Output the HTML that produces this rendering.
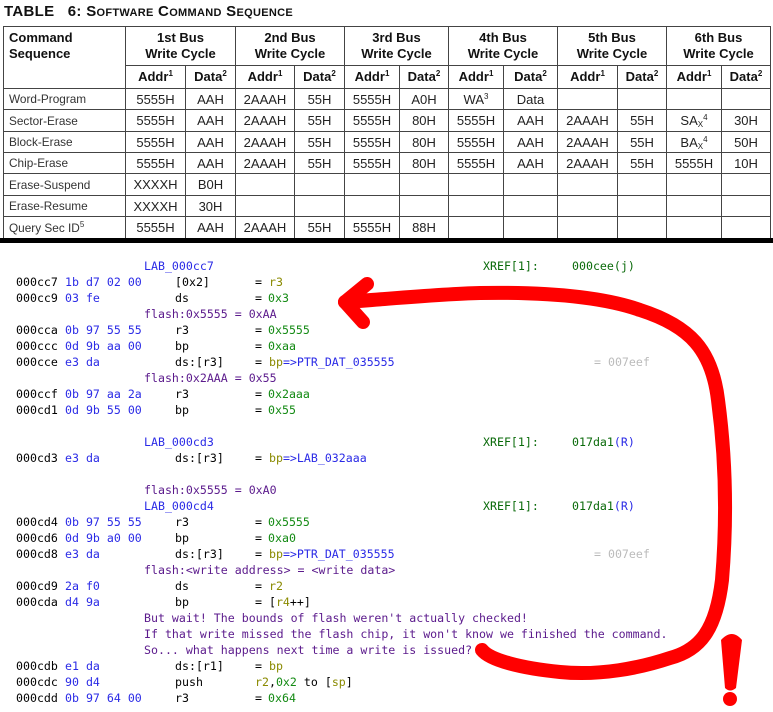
<!DOCTYPE html>
<html><head><meta charset="utf-8">
<style>
body{margin:0;width:773px;height:712px;background:#fff;position:relative;overflow:hidden;}
.title{position:absolute;left:4px;top:3px;font:bold 15px "Liberation Sans",sans-serif;font-variant:small-caps;color:#111;letter-spacing:0.3px}
table{position:absolute;left:3px;top:26px;border-collapse:collapse;table-layout:fixed;font-family:"Liberation Sans",sans-serif;color:#222}
td,th{border:1px solid #444;padding:0;text-align:center;font-size:13px;overflow:hidden;white-space:nowrap}
th{font-weight:bold;color:#111;font-size:13px;line-height:16px}
td.n{text-align:left;padding-left:5px;font-size:11.8px;color:#333}
sup{font-size:8px;vertical-align:5px;line-height:0}
sub{font-size:8px;vertical-align:-2px;line-height:0}
.bar{position:absolute;left:0;top:238px;width:773px;height:5px;background:#000}
.code{position:absolute;left:0;top:0;font:11.6px "DejaVu Sans Mono",monospace;white-space:pre}
.l{position:absolute;height:16px;line-height:16px;left:0;width:773px}
.l span{position:absolute}
.a{left:16px;color:#000}.b{left:65px;color:#2a2ae6}.lb{left:144px;color:#2a2ae6}.c{left:144px;color:#5b1a8c}
.m{left:175px;color:#000}.e{left:255px;color:#000}.v{left:268px;color:#138a13}.o{color:#8a8a00}.bl{color:#2a2ae6}
.x{left:483px;color:#0a6a0a}.xv{left:572px;color:#0a6a0a}.g{left:594px;color:#bbb}
</style></head><body>
<div class="title">TABLE&nbsp;&nbsp;&nbsp;6: Software Command Sequence</div>
<table>
<colgroup><col style="width:122px"><col style="width:60px"><col style="width:50px"><col style="width:59px"><col style="width:50px"><col style="width:55px"><col style="width:49px"><col style="width:55px"><col style="width:54px"><col style="width:60px"><col style="width:49px"><col style="width:55px"><col style="width:49px"></colgroup>
<tr style="height:39px"><th rowspan="2" style="text-align:left;vertical-align:top;padding:3px 0 0 5px">Command<br>Sequence</th><th colspan="2">1st Bus<br>Write Cycle</th><th colspan="2">2nd Bus<br>Write Cycle</th><th colspan="2">3rd Bus<br>Write Cycle</th><th colspan="2">4th Bus<br>Write Cycle</th><th colspan="2">5th Bus<br>Write Cycle</th><th colspan="2">6th Bus<br>Write Cycle</th></tr>
<tr style="height:23px"><th>Addr<sup>1</sup></th><th>Data<sup>2</sup></th><th>Addr<sup>1</sup></th><th>Data<sup>2</sup></th><th>Addr<sup>1</sup></th><th>Data<sup>2</sup></th><th>Addr<sup>1</sup></th><th>Data<sup>2</sup></th><th>Addr<sup>1</sup></th><th>Data<sup>2</sup></th><th>Addr<sup>1</sup></th><th>Data<sup>2</sup></th></tr>
<tr style="height:21px"><td class="n">Word-Program</td><td>5555H</td><td>AAH</td><td>2AAAH</td><td>55H</td><td>5555H</td><td>A0H</td><td>WA<sup>3</sup></td><td>Data</td><td></td><td></td><td></td><td></td></tr>
<tr style="height:22px"><td class="n">Sector-Erase</td><td>5555H</td><td>AAH</td><td>2AAAH</td><td>55H</td><td>5555H</td><td>80H</td><td>5555H</td><td>AAH</td><td>2AAAH</td><td>55H</td><td>SA<sub>X</sub><sup>4</sup></td><td>30H</td></tr>
<tr style="height:21px"><td class="n">Block-Erase</td><td>5555H</td><td>AAH</td><td>2AAAH</td><td>55H</td><td>5555H</td><td>80H</td><td>5555H</td><td>AAH</td><td>2AAAH</td><td>55H</td><td>BA<sub>X</sub><sup>4</sup></td><td>50H</td></tr>
<tr style="height:21px"><td class="n">Chip-Erase</td><td>5555H</td><td>AAH</td><td>2AAAH</td><td>55H</td><td>5555H</td><td>80H</td><td>5555H</td><td>AAH</td><td>2AAAH</td><td>55H</td><td>5555H</td><td>10H</td></tr>
<tr style="height:22px"><td class="n">Erase-Suspend</td><td>XXXXH</td><td>B0H</td><td></td><td></td><td></td><td></td><td></td><td></td><td></td><td></td><td></td><td></td></tr>
<tr style="height:21px"><td class="n">Erase-Resume</td><td>XXXXH</td><td>30H</td><td></td><td></td><td></td><td></td><td></td><td></td><td></td><td></td><td></td><td></td></tr>
<tr style="height:22px"><td class="n">Query Sec ID<sup>5</sup></td><td>5555H</td><td>AAH</td><td>2AAAH</td><td>55H</td><td>5555H</td><td>88H</td><td></td><td></td><td></td><td></td><td></td><td></td></tr>
</table>
<div class="bar"></div>
<div class="code">
<div class="l" style="top:258px"><span class="lb">LAB_000cc7</span><span class="x">XREF[1]:</span><span class="xv">000cee(j)</span></div>
<div class="l" style="top:274px"><span class="a">000cc7</span><span class="b">1b d7 02 00</span><span class="m">[0x2]</span><span class="e">= <span class="o" style="position:static">r3</span></span></div>
<div class="l" style="top:290px"><span class="a">000cc9</span><span class="b">03 fe</span><span class="m">ds</span><span class="e">=</span><span class="v">0x3</span></div>
<div class="l" style="top:306px"><span class="c">flash:0x5555 = 0xAA</span></div>
<div class="l" style="top:322px"><span class="a">000cca</span><span class="b">0b 97 55 55</span><span class="m">r3</span><span class="e">=</span><span class="v">0x5555</span></div>
<div class="l" style="top:338px"><span class="a">000ccc</span><span class="b">0d 9b aa 00</span><span class="m">bp</span><span class="e">=</span><span class="v">0xaa</span></div>
<div class="l" style="top:354px"><span class="a">000cce</span><span class="b">e3 da</span><span class="m">ds:[r3]</span><span class="e">= <span class="o" style="position:static">bp</span><span class="bl" style="position:static">=&gt;PTR_DAT_035555</span></span><span class="g">= 007eef</span></div>
<div class="l" style="top:370px"><span class="c">flash:0x2AAA = 0x55</span></div>
<div class="l" style="top:386px"><span class="a">000ccf</span><span class="b">0b 97 aa 2a</span><span class="m">r3</span><span class="e">=</span><span class="v">0x2aaa</span></div>
<div class="l" style="top:402px"><span class="a">000cd1</span><span class="b">0d 9b 55 00</span><span class="m">bp</span><span class="e">=</span><span class="v">0x55</span></div>
<div class="l" style="top:434px"><span class="lb">LAB_000cd3</span><span class="x">XREF[1]:</span><span class="xv">017da1<span class="bl" style="position:static">(R)</span></span></div>
<div class="l" style="top:450px"><span class="a">000cd3</span><span class="b">e3 da</span><span class="m">ds:[r3]</span><span class="e">= <span class="o" style="position:static">bp</span><span class="bl" style="position:static">=&gt;LAB_032aaa</span></span></div>
<div class="l" style="top:482px"><span class="c">flash:0x5555 = 0xA0</span></div>
<div class="l" style="top:498px"><span class="lb">LAB_000cd4</span><span class="x">XREF[1]:</span><span class="xv">017da1<span class="bl" style="position:static">(R)</span></span></div>
<div class="l" style="top:514px"><span class="a">000cd4</span><span class="b">0b 97 55 55</span><span class="m">r3</span><span class="e">=</span><span class="v">0x5555</span></div>
<div class="l" style="top:530px"><span class="a">000cd6</span><span class="b">0d 9b a0 00</span><span class="m">bp</span><span class="e">=</span><span class="v">0xa0</span></div>
<div class="l" style="top:546px"><span class="a">000cd8</span><span class="b">e3 da</span><span class="m">ds:[r3]</span><span class="e">= <span class="o" style="position:static">bp</span><span class="bl" style="position:static">=&gt;PTR_DAT_035555</span></span><span class="g">= 007eef</span></div>
<div class="l" style="top:562px"><span class="c">flash:&lt;write address&gt; = &lt;write data&gt;</span></div>
<div class="l" style="top:578px"><span class="a">000cd9</span><span class="b">2a f0</span><span class="m">ds</span><span class="e">= <span class="o" style="position:static">r2</span></span></div>
<div class="l" style="top:594px"><span class="a">000cda</span><span class="b">d4 9a</span><span class="m">bp</span><span class="e">= [<span class="o" style="position:static">r4</span>++]</span></div>
<div class="l" style="top:610px"><span class="c">But wait! The bounds of flash weren't actually checked!</span></div>
<div class="l" style="top:626px"><span class="c">If that write missed the flash chip, it won't know we finished the command.</span></div>
<div class="l" style="top:642px"><span class="c">So... what happens next time a write is issued?</span></div>
<div class="l" style="top:658px"><span class="a">000cdb</span><span class="b">e1 da</span><span class="m">ds:[r1]</span><span class="e">= <span class="o" style="position:static">bp</span></span></div>
<div class="l" style="top:674px"><span class="a">000cdc</span><span class="b">90 d4</span><span class="m">push</span><span class="e"><span class="o" style="position:static">r2</span>,<span class="v" style="position:static">0x2</span> to [<span class="o" style="position:static">sp</span>]</span></div>
<div class="l" style="top:690px"><span class="a">000cdd</span><span class="b">0b 97 64 00</span><span class="m">r3</span><span class="e">=</span><span class="v">0x64</span></div>
</div>
<svg width="773" height="712" style="position:absolute;left:0;top:0" viewBox="0 0 773 712">
<g fill="none" stroke="#f00" stroke-width="14" stroke-linecap="round" stroke-linejoin="round">
<path d="M345,302 C400,298 440,294 480,293 C540,292 600,296 640,310 C690,326 712,350 718,400 C726,460 727,520 722,580 C716,630 700,650 670,658 C640,668 600,676 560,672 C520,668 490,660 482,650"/>
<path d="M367,284 L345,302 L363,322"/>
</g>
<path d="M721,640 Q732,628 742,640 L736,688 Q730,693 725,688 Z" fill="#f00"/>
<circle cx="730" cy="699" r="7" fill="#f00"/>
</svg>
</body></html>
